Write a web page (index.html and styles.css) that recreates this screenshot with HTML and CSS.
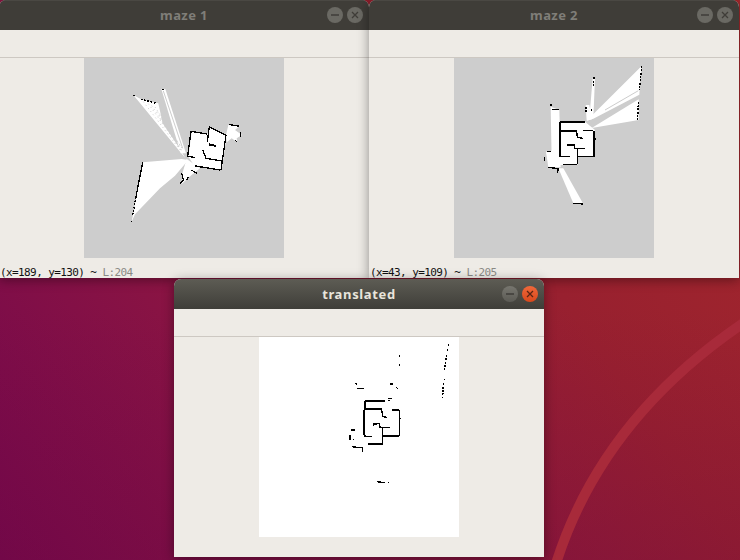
FILE: index.html
```html
<!DOCTYPE html>
<html lang="en">

<head>
    <meta charset="UTF-8">
    <meta name="viewport" content="width=device-width, initial-scale=1.0">
    <title>maze windows</title>
    <link rel="stylesheet" href="styles.css">
</head>

<body>

    <div class="desktop">
        <svg class="wallpaper" width="740" height="560" viewBox="0 0 740 560">
            <path class="arc" d="M748 320 C670 372 590 450 554 570"></path>
        </svg>

        <!-- map svgs use 3 units per pixel -->
        <div class="window maze-1">
            <div class="titlebar">
                <span class="title">maze 1</span>
                <div class="buttons">
                    <span class="btn"><svg width="16" height="16" viewBox="0 0 16 16"><path d="M4 8h8"></path></svg></span>
                    <span class="btn"><svg width="16" height="16" viewBox="0 0 16 16"><path d="M5 5l6 6M11 5l-6 6"></path></svg></span>
                </div>
            </div>
            <div class="toolbar"></div>
            <div class="content">
                <svg class="map gray" width="200" height="200" viewBox="-108 -81 600 600">
                    <polygon class="open" points="195,218 40,30 62,42 115,55 128,115 182,195"></polygon>
                    <polygon class="open" points="124,12 136,12 198,205 182,205"></polygon>
                    <polygon class="open" points="68,232 185,222 205,225 165,272 120,310 45,388 35,410"></polygon>
                    <polygon class="open" points="215,140 262,147 268,125 320,150 305,255 225,245 205,215"></polygon>
                    <polygon class="open" points="318,150 325,120 360,122 345,135 366,150 350,160 352,172 335,160 320,172"></polygon>
                    <polygon class="open" points="200,222 240,250 212,272 185,297 188,262"></polygon>
                    <path class="thin" d="M130 18L188 190"></path>
                    <path class="dots" d="M70 50L180 195M85 56L184 196M95 62L186 198M105 66L186 190M112 80L182 185M120 100L180 180"></path>
                    <path class="dots" d="M150 290L60 375"></path>
                    <path class="wall" d="M213 139L262 147M213 139L203 213L225 218M268 125L262 170M268 125L316 150"></path>
                    <path class="wall" d="M318 150L303 255M226 243L301 255M248 195L258 220L305 228"></path>
                    <path class="wall thick" d="M266 178L288 183"></path>
                    <path class="wall" d="M326 118L358 124M361 140L361 156M345 165L352 172"></path>
                    <path class="wall" d="M185 265L190 285L180 297M214 255L232 266M205 275L200 285"></path>
                    <path class="wall" d="M68 232L48 335"></path>
                    <path class="dashed" d="M48 335L38 390M36 408L34 412M62 42L112 56M40 30L44 34M128 12L130 16"></path>
                </svg>
            </div>
            <div class="status">(x=189, y=130) ~ <span class="level">L:204</span></div>
        </div>

        <div class="window maze-2">
            <div class="titlebar">
                <span class="title">maze 2</span>
                <div class="buttons">
                    <span class="btn"><svg width="16" height="16" viewBox="0 0 16 16"><path d="M4 8h8"></path></svg></span>
                    <span class="btn"><svg width="16" height="16" viewBox="0 0 16 16"><path d="M5 5l6 6M11 5l-6 6"></path></svg></span>
                </div>
            </div>
            <div class="toolbar"></div>
            <div class="content">
                <svg class="map gray" width="200" height="200" viewBox="-228 -6 600 600">
                    <polygon class="open" points="170,182 335,18 330,68 328,104 190,176"></polygon>
                    <polygon class="open" points="185,204 326,118 326,180"></polygon>
                    <polygon class="open" points="188,55 195,55 190,175 178,175"></polygon>
                    <polygon class="open" points="167,135 178,135 186,178 170,182"></polygon>
                    <polygon class="open" points="62,140 88,150 92,300 65,300"></polygon>
                    <polygon class="open" points="90,185 165,185 195,210 190,290 145,290 142,315 90,315"></polygon>
                    <polygon class="open" points="48,275 90,268 92,322 55,322"></polygon>
                    <polygon class="open" points="85,325 100,325 160,432 130,430"></polygon>
                    <path class="thin" d="M225 150L325 92"></path>
                    <path class="wall" d="M90 186L165 186M90 186L90 290M88 213L140 213L142 232L158 235M158 212L190 212"></path>
                    <path class="wall" d="M192 212L192 290M145 290L190 290M142 265L142 313M100 313L142 313M90 290L120 290"></path>
                    <path class="wall" d="M112 255L132 255L134 265L165 266M65 148L88 148"></path>
                    <path class="wall" d="M62 132L64 138M43 290L43 302M50 275L62 275M55 322L85 326L82 340M130 430L160 432"></path>
                    <path class="dashed" d="M335 18L328 90M325 125L323 180M192 52L190 78M168 140L168 155M185 148L185 155M196 235L196 242"></path>
                </svg>
            </div>
            <div class="status">(x=43, y=109) ~ <span class="level">L:205</span></div>
        </div>

        <div class="window translated">
            <div class="titlebar">
                <span class="title">translated</span>
                <div class="buttons">
                    <span class="btn"><svg width="16" height="16" viewBox="0 0 16 16"><path d="M4 8h8"></path></svg></span>
                    <span class="btn close"><svg width="16" height="16" viewBox="0 0 16 16"><path d="M5 5l6 6M11 5l-6 6"></path></svg></span>
                </div>
            </div>
            <div class="toolbar"></div>
            <div class="content">
                <svg class="map white" width="200" height="200" viewBox="-243 -9 600 600">
                    <path class="wall thick" d="M75 182L135 182M75 208L125 208M128 288L178 288M85 312L128 312"></path>
                    <path class="wall" d="M75 182L75 210M72 210L72 285M125 208L128 230L142 232M157 210L178 210M178 210L178 288"></path>
                    <path class="wall" d="M128 265L128 312M72 288L95 290M100 258L102 252L118 251L120 262L150 263"></path>
                    <path class="wall" d="M145 176L156 175M145 182L150 182M180 235L183 235"></path>
                    <path class="wall" d="M50 145L72 145M150 132L160 132M170 142L173 148M45 130L50 133"></path>
                    <path class="wall" d="M33 270L45 270M30 285L30 300M38 298L42 298M36 320L70 324M68 324L68 337M110 425L135 428M145 428L148 428"></path>
                    <path class="wall" d="M177 48L180 48M177 75L180 75M325 15L327 15M321 30L323 30M312 118L315 118"></path>
                    <path class="dashed" d="M320 45L313 90M310 130L308 175"></path>
                </svg>
            </div>
        </div>
    </div>

</body>

</html>
```

FILE: styles.css
```css
html,
body {
    margin: 0;
    padding: 0;
}

body {
    width: 740px;
    height: 560px;
    overflow: hidden;
}

.desktop {
    position: relative;
    width: 740px;
    height: 560px;
    overflow: hidden;
    background:
        linear-gradient(to top, rgba(110, 10, 60, 0.3), rgba(110, 10, 60, 0) 45%),
        linear-gradient(55deg, #74074d 0%, #8a1443 32%, #98202f 66%, #a4282c 100%);
}

.wallpaper {
    position: absolute;
    left: 0;
    top: 0;
}

.arc {
    fill: none;
    stroke: #a82a3a;
    stroke-width: 10;
}

.window {
    position: absolute;
    width: 370px;
    display: flex;
    flex-direction: column;
    background-color: #eeebe6;
    border-radius: 7px 7px 0 0;
    box-shadow: 0 2px 12px rgba(0, 0, 0, 0.4);
    overflow: hidden;
}

.maze-1 {
    left: -1px;
    top: 0;
}

.maze-2 {
    left: 369px;
    top: 0;
}

.translated {
    left: 174px;
    top: 279px;
}

.titlebar {
    position: relative;
    height: 30px;
    padding-bottom: 2px;
    display: flex;
    justify-content: center;
    align-items: center;
    background-color: #3f3d38;
    border-top: 1px solid #4a4843;
    box-sizing: border-box;
}

.title {
    font-family: "Noto Sans", sans-serif;
    font-size: 13px;
    font-weight: bold;
    letter-spacing: 0.4px;
    color: #7f7e78;
}

.buttons {
    position: absolute;
    right: 6px;
    top: 6px;
    display: flex;
    gap: 4px;
}

.btn {
    width: 16px;
    height: 16px;
    border-radius: 50%;
    background-color: #6a6963;
}

.btn svg {
    display: block;
}

.btn path {
    fill: none;
    stroke: #3f3d38;
    stroke-width: 1.3;
}

.translated .titlebar {
    background: linear-gradient(#5c5b53, #3f3e39);
    border-top-color: #5c5b53;
}

.translated .title {
    color: #e8e5dc;
    letter-spacing: 0.65px;
}

.translated .btn {
    background: linear-gradient(#77766f, #5c5b55);
}

.translated .btn.close {
    background: linear-gradient(#f0683a, #d9481c);
}

.translated .btn.close path {
    stroke: #5a2414;
}

.toolbar {
    height: 27px;
    border-bottom: 1px solid #cdc8c2;
}

.content {
    display: flex;
    justify-content: center;
    height: 200px;
}

.translated .content {
    height: 220px;
}

.map {
    display: block;
}

.map.gray {
    background-color: #cdcdcd;
}

.map.white {
    background-color: #fff;
}

.open {
    fill: #fff;
}

.wall,
.dashed {
    fill: none;
    stroke: #000;
    stroke-width: 4;
    shape-rendering: crispEdges;
}

.wall.thick {
    stroke-width: 6;
}

.dashed {
    stroke-dasharray: 6 4;
}

.thin {
    fill: none;
    stroke: #cdcdcd;
    stroke-width: 3;
}

.dots {
    fill: none;
    stroke: #cdcdcd;
    stroke-width: 3;
    stroke-dasharray: 3 9;
}

.status {
    height: 20px;
    line-height: 20px;
    padding: 5px 0 0 1px;
    box-sizing: border-box;
    overflow: hidden;
    white-space: nowrap;
    font-family: "DejaVu Sans Mono", monospace;
    font-size: 11px;
    letter-spacing: -0.6px;
    color: #111;
}

.level {
    color: #8a8a85;
}
```
